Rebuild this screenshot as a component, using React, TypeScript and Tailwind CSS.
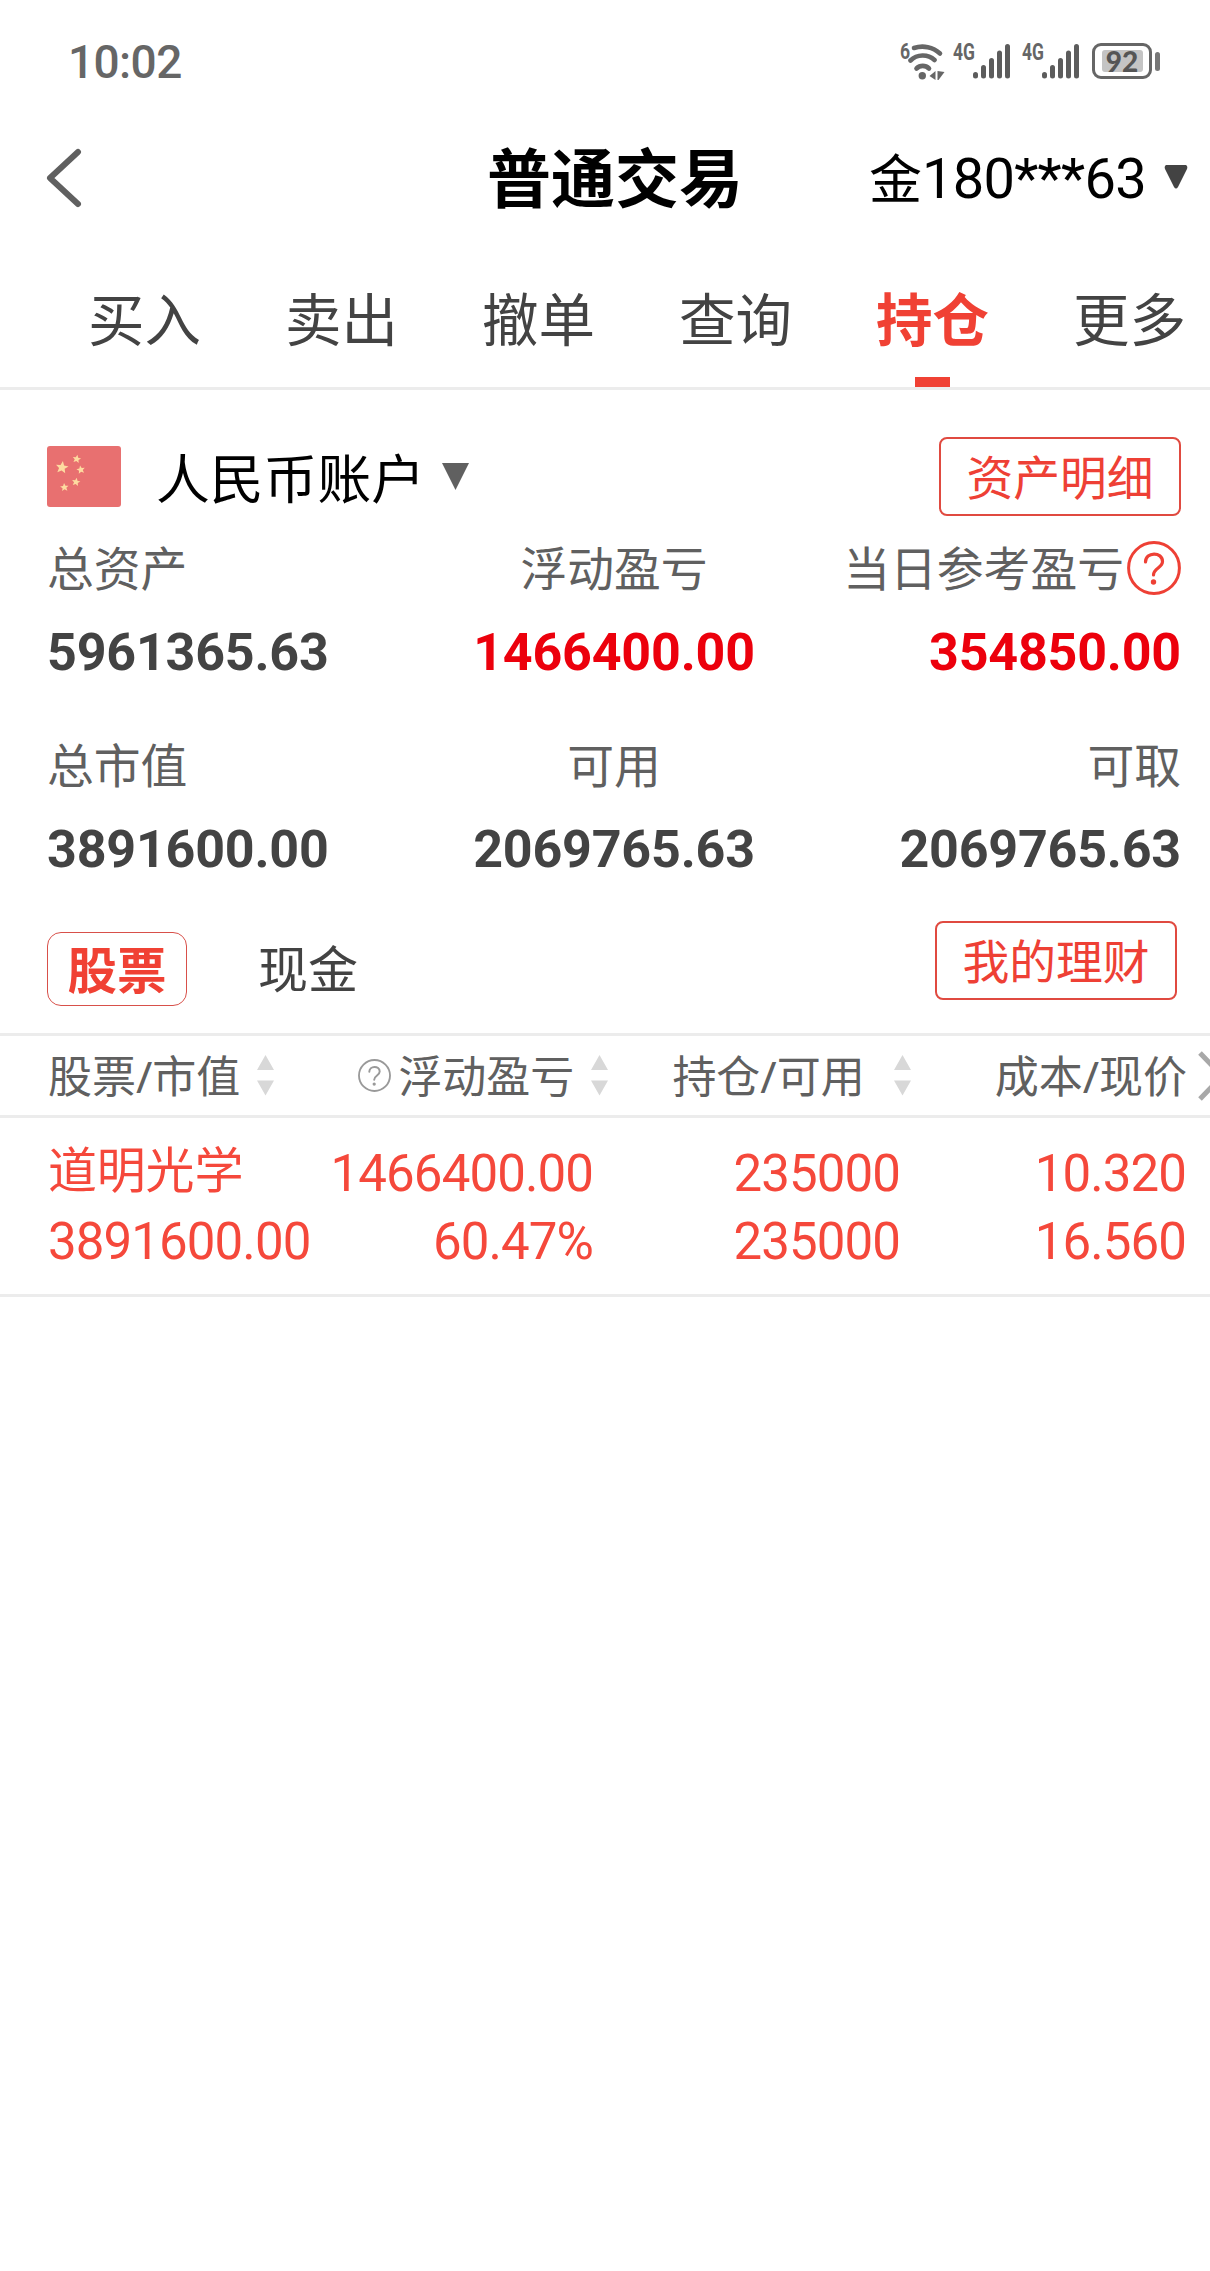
import type { ReactNode } from "react";

const tabs = ["买入", "卖出", "撤单", "查询", "持仓", "更多"];

// [x, y, scale, rotation] of each star on the flag
const stars = [
  [15, 21.5, 1.05, 8],
  [29.7, 13, 0.7, 10],
  [33.8, 23.8, 0.7, -10],
  [29, 36, 0.7, 10],
  [17.4, 41.4, 0.7, -5],
];

function Signal({ className }: { className: string }) {
  return (
    <div className={`flex h-[38px] w-[58px] items-start ${className}`}>
      <span className="w-[19px] shrink-0 origin-left scale-x-[.76] font-['Roboto',sans-serif] text-[23px] leading-[20px] font-bold">4G</span>
      <svg width="39" height="38" viewBox="0 0 39 38" className="shrink-0 text-[#5c5c5c]">
        <g stroke="currentColor" strokeWidth="5" strokeLinecap="round">
          <path d="M3.500 31.500V33" />
          <path d="M11.500 24.500V33" />
          <path d="M19.500 17.500V33" />
          <path d="M27.500 10V33" />
          <path d="M35.500 3.500V33" />
        </g>
      </svg>
    </div>
  );
}

function Wifi() {
  return (
    <svg width="37" height="38" viewBox="0 0 37 38" fill="none" stroke="currentColor" strokeWidth="4.600" strokeLinecap="round" className="shrink-0">
      <path d="M6 5C15 2 25 4 32 10.500" />
      <path d="M2.500 17.500C9 11 20 11 26.500 17" />
      <path d="M8.500 25.500C12 22 17.500 22 21 25.500" />
      <circle cx="14.300" cy="32.700" r="3.700" fill="currentColor" stroke="none" />
      <path d="M27.500 28V37L21.500 33Z M29.500 28L36.500 29L30.500 37H29.500Z" fill="currentColor" stroke="none" />
    </svg>
  );
}

function StatusBar() {
  return (
    <div className="flex h-[119px] justify-between pt-[32px] pr-[50px] pl-[68px] text-[#666]">
      <span className="font-['Roboto',sans-serif] text-[46px] leading-[61px] font-medium tracking-[-0.6px]">10:02</span>
      <div className="flex h-[49px] items-start pt-[11px]">
        <span className="w-[8px] origin-left scale-x-[.8] font-['Roboto',sans-serif] text-[22px] leading-[18px] font-bold">6</span>
        <Wifi />
        <Signal className="ml-[8px]" />
        <Signal className="ml-[11px]" />
        <div className="ml-[12px] flex items-center">
          <div className="flex h-[36px] w-[60px] items-center justify-center rounded-[9px] border-[3px] border-[#666] bg-white">
            <span className="h-[22px] w-[41px] rounded-[3px] bg-[#c4c4c4] text-center font-['Lato',sans-serif] text-[28px] leading-[22px] font-black text-[#555]">92</span>
          </div>
          <span className="ml-[3px] h-[19px] w-[5px] rounded-[3px] bg-[#777]" />
        </div>
      </div>
    </div>
  );
}

function Help({ className }: { className: string }) {
  return (
    <svg viewBox="0 0 54 54" className={`shrink-0 ${className}`} fill="none" stroke="currentColor">
      <circle cx="27" cy="27" r="25.400" strokeWidth="3" />
      <path d="M18.500 21C18.500 10.500 35.500 10.500 35.500 20.500C35.500 27 26.500 27 26.500 34" strokeWidth="3.200" strokeLinecap="round" />
      <circle cx="26.500" cy="41" r="2.700" fill="currentColor" stroke="none" />
    </svg>
  );
}

function Sort({ className }: { className: string }) {
  return (
    <svg width="17" height="41" viewBox="0 0 17 41" fill="#d8d8d8" className={`shrink-0 ${className}`}>
      <path d="M8.500 0L17 15H0Z M0 25.500H17L8.500 40.500Z" />
    </svg>
  );
}

function Stat({ label, value, className = "" }: { label: ReactNode; value: string; className?: string }) {
  return (
    <div className={`flex flex-col ${className}`}>
      <div className="flex h-[60px] items-center text-[46.8px] leading-[60px] text-[#606060]">{label}</div>
      <div className="mt-[25px] h-[60px] font-['Roboto',sans-serif] text-[52px] leading-[60px] font-bold tracking-[-0.2px]">{value}</div>
    </div>
  );
}

export default function App() {
  return (
    <div className="min-h-[2271px] w-[1210px] overflow-hidden bg-white font-['Noto_Sans','Noto_Sans_CJK_SC',sans-serif] whitespace-nowrap text-[#434343]">
      <StatusBar />
      <header className="grid h-[119px] grid-cols-[441px_256px_1fr] items-center pr-[22px] pl-[46px] text-black">
        <svg width="36" height="60" viewBox="0 0 36 60" fill="none" stroke="#606060" strokeWidth="6" strokeLinecap="round" strokeLinejoin="round" className="mb-[2px]">
          <path d="M32 4L4 30L32 56" />
        </svg>
        <h1 className="pb-[2px] text-[64px] leading-[80px] font-bold">普通交易</h1>
        <div className="flex items-center justify-end">
          <span className="text-[53px] leading-[82px]">金</span>
          <span className="font-['Roboto',sans-serif] text-[56px] leading-[82px] tracking-[-0.7px]">180***63</span>
          <svg width="24" height="24" viewBox="0 0 24 24" fill="#434343" className="mb-[3px] ml-[18px]">
            <path d="M2 0H22Q24 1 23 4L14 22Q12 25 10 22L1 4Q0 1 2 0Z" />
          </svg>
        </div>
      </header>
      <nav className="flex h-[152px] border-b-[3px] border-[#ececec] pl-[46px]">
        {tabs.map((tab) => (
          <div key={tab} className={`relative w-[197px] shrink-0 pt-[42px] text-center text-[56.5px] leading-[80px] ${tab === "持仓" ? "font-bold text-[#f04134]" : ""}`}>
            {tab}
            {tab === "持仓" && <span className="absolute bottom-0 left-[81px] h-[10px] w-[35px] bg-[#f04134]" />}
          </div>
        ))}
      </nav>

      <section className="flex h-[148px] items-start pt-[47px] pr-[29px] pl-[47px]">
        <svg width="74" height="61" viewBox="0 0 74 61" className="mt-[9px]">
          <rect width="74" height="61" rx="3" fill="#e87070" />
          {stars.map(([x, y, scale, turn]) => (
            <path
              key={`${x}-${y}`}
              d="M0-6.200L1.700-2.200L6-1.900L2.700.9L3.800 5L0 2.800L-3.800 5L-2.700.9L-6-1.900L-1.700-2.200Z"
              transform={`translate(${x} ${y}) rotate(${turn}) scale(${scale})`}
              fill="#fddba0"
            />
          ))}
        </svg>
        <span className="mt-[1px] ml-[35px] text-[53.8px] leading-[80px] text-black">人民币账户</span>
        <svg width="27" height="27" viewBox="0 0 27 27" fill="#606060" className="mt-[26px] ml-[17px]">
          <path d="M0 0H27L13.500 27Z" />
        </svg>
        <button className="ml-auto h-[79px] w-[242px] rounded-[8px] border-2 border-[#e04a40] text-[46.8px] leading-[76px] text-[#ee4035]">资产明细</button>
      </section>

      <section className="grid grid-cols-[335px_1fr_335px] gap-y-[52px] pr-[29px] pl-[47px]">
        <Stat label="总资产" value="5961365.63" />
        <Stat label="浮动盈亏" value="1466400.00" className="items-center text-[#ec000c]" />
        <Stat
          label={<>当日参考盈亏<Help className="ml-[3px] size-[54px] text-[#ee4035]" /></>}
          value="354850.00"
          className="items-end text-[#ec000c]"
        />
        <Stat label="总市值" value="3891600.00" />
        <Stat label="可用" value="2069765.63" className="items-center" />
        <Stat label="可取" value="2069765.63" className="items-end" />
      </section>

      <section className="flex h-[153px] items-start pt-[41px] pr-[33px] pl-[47px]">
        <button className="mt-[11px] h-[74px] w-[140px] rounded-[14px] border border-[#d8504a] text-[49.5px] leading-[74px] font-bold text-[#f04134]">股票</button>
        <span className="mt-[11px] ml-[71px] text-[50px] leading-[75px]">现金</span>
        <button className="ml-auto h-[79px] w-[242px] rounded-[8px] border-2 border-[#e04a40] text-[46.8px] leading-[76px] text-[#ee4035]">我的理财</button>
      </section>

      <div className="flex h-[85px] items-center border-y-[3px] border-[#ececec] pl-[48px] text-[44px] leading-[80px] text-[#606060]">
        <span className="pt-[1px]">股票/市值</span>
        <Sort className="ml-[17px]" />
        <Help className="ml-[84px] size-[33px] text-[#999]" />
        <span className="ml-[7px] pt-[1px]">浮动盈亏</span>
        <Sort className="ml-[17px]" />
        <span className="ml-[64px] pt-[1px]">持仓/可用</span>
        <Sort className="ml-[29px]" />
        <span className="ml-[84px] pt-[1px]">成本/现价</span>
        <svg width="28" height="50" viewBox="0 0 28 50" fill="none" stroke="#a8a8a8" strokeWidth="5" className="ml-[11px] shrink-0">
          <path d="M2 2L24 25L2 48" />
        </svg>
      </div>
      <div className="grid h-[179px] grid-cols-[264px_281px_307px_286px] border-b-[3px] border-[#ececec] pt-[22px] pl-[48px] font-['Roboto','Noto_Sans_CJK_SC',sans-serif] text-[51px] leading-[68px] tracking-[-0.9px] text-[#f5483b]">
        <div>
          <div className="h-[68px] text-[49px] leading-[64px] tracking-[-0.2px]">道明光学</div>
          3891600.00
        </div>
        <div className="text-right">1466400.00<br />60.47%</div>
        <div className="text-right">235000<br />235000</div>
        <div className="text-right">10.320<br />16.560</div>
      </div>
    </div>
  );
}
